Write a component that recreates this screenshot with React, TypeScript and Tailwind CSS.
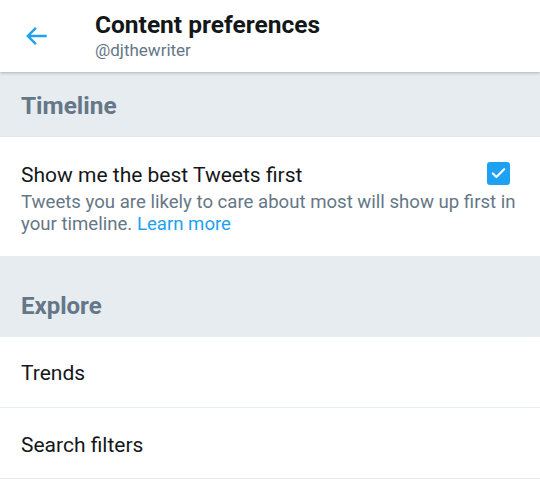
import { Check } from 'lucide-react'

export default function App() {
  return (
    <div className="w-[540px] h-[485px] overflow-hidden bg-white font-['Roboto',sans-serif]">
      <header className="relative z-10 flex h-[72px] items-start bg-white shadow-[0_1px_3px_rgba(0,0,0,0.25)]">
        <div className="flex w-[95px] pl-[24px] pt-[23px]">
          <svg viewBox="0 0 24 24" className="size-[26px] text-[#1da1f2]" fill="none" stroke="currentColor" strokeWidth="2.2">
            <path d="M21 12H4M11 4.5L3.5 12l7.5 7.5" />
          </svg>
        </div>
        <div className="flex flex-col pt-[10px]">
          <div className="text-[24.5px] font-bold leading-[30px] text-[#14171a]">Content preferences</div>
          <div className="text-[17px] leading-[20px] text-[#657786]">@djthewriter</div>
        </div>
      </header>

      <div className="flex h-[65px] items-center border-b border-[#e1e8ed] bg-[#e6ecf0] px-[21px] pt-[5px]">
        <span className="text-[24.4px] font-bold text-[#657786]">Timeline</span>
      </div>

      <div className="h-[119px] px-[21px] pt-[25px]">
        <div className="flex items-start justify-between">
          <div className="text-[21px] leading-[27px] text-[#14171a]">Show me the best Tweets first</div>
          <div className="mr-[9px] flex size-[23px] items-center justify-center rounded-[3px] bg-[#1da1f2]">
            <Check className="size-[17px] text-white" strokeWidth={3} />
          </div>
        </div>
        <p className="mt-[2px] text-[18.6px] leading-[22px] text-[#657786]">
          Tweets you are likely to care about most will show up first in your timeline.{' '}
          <a className="text-[#1da1f2]">Learn more</a>
        </p>
      </div>

      <div className="flex h-[81px] items-end bg-[#e6ecf0] px-[21px] pb-[13px]">
        <span className="text-[24px] font-bold text-[#657786]">Explore</span>
      </div>

      <div className="flex h-[71px] items-center border-b border-[#e6ecf0] px-[21px] pt-[4px] text-[21px] text-[#14171a]">Trends</div>
      <div className="flex h-[71px] items-center border-b border-[#e6ecf0] px-[21px] pt-[5px] text-[21px] text-[#14171a]">Search filters</div>
    </div>
  )
}
